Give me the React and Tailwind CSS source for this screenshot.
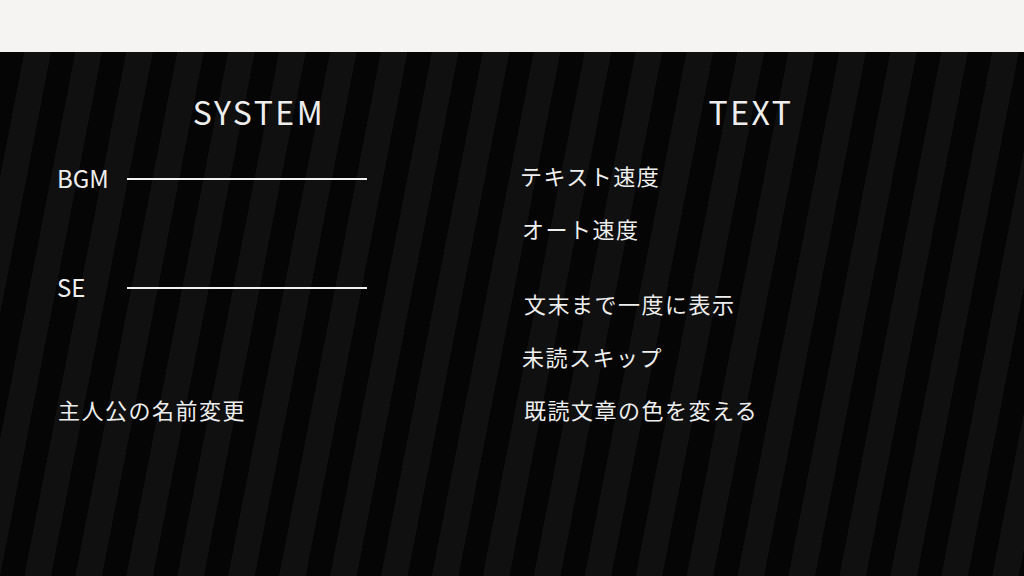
// Config screen - SYSTEM / TEXT settings
const FONT = { fontFamily: '"Noto Sans CJK JP", "Noto Sans", sans-serif' };

function SliderRow({ label, className }) {
  return (
    <div className={`flex h-[30px] ${className}`}>
      <span className="w-[70px] self-start text-[24px] leading-[28px]">{label}</span>
      <div className="w-[240px] h-[2px] mt-[14px] bg-[#f2f2f2]" />
    </div>
  );
}

function TextItem({ children, className }) {
  return (
    <div className={`h-[30px] text-[22px] leading-[30px] tracking-[1.5px] ${className}`}>
      {children}
    </div>
  );
}

export default function App() {
  return (
    <div className="w-[1024px] h-[576px] flex flex-col overflow-hidden" style={FONT}>
      <div className="h-[52px] bg-[#f5f4f2]" />
      <div className="flex-1 flex text-[#eeeeee] bg-[repeating-linear-gradient(101deg,#050505_0px,#050505_24px,#101010_24px,#101010_50px)]">
        {/* SYSTEM column */}
        <div className="w-[518px] flex flex-col pt-[39px]">
          <h2 className="h-[40px] text-center text-[32px] leading-[40px] tracking-[2.5px]">SYSTEM</h2>
          <div className="pl-[57px] flex flex-col">
            <SliderRow label="BGM" className="mt-[33px]" />
            <SliderRow label=" SE" className="mt-[79px]" />
            <TextItem className="mt-[91px] pl-[1px]">主人公の名前変更</TextItem>
          </div>
        </div>
        {/* TEXT column */}
        <div className="flex-1 flex flex-col pt-[39px]">
          <h2 className="h-[40px] text-center pr-[40px] text-[32px] leading-[40px] tracking-[2.5px]">TEXT</h2>
          <div className="flex flex-col pl-[2px]">
            <TextItem className="mt-[29px]">テキスト速度</TextItem>
            <TextItem className="mt-[23px] pl-[2px]">オート速度</TextItem>
            <TextItem className="mt-[45px] pl-[4px]">文末まで一度に表示</TextItem>
            <TextItem className="mt-[23px] pl-[2px]">未読スキップ</TextItem>
            <TextItem className="mt-[23px] pl-[4px]">既読文章の色を変える</TextItem>
          </div>
        </div>
      </div>
    </div>
  );
}
